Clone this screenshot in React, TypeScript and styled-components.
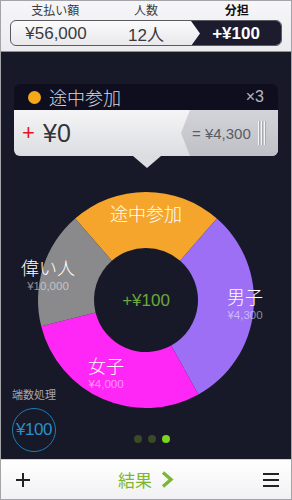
import React from "react";
import styled, { createGlobalStyle } from "styled-components";

const Global = createGlobalStyle`
  html, body { margin: 0; padding: 0; background: #ffffff; }
  * { box-sizing: border-box; }
`;

const FONT = `"Liberation Sans", "Noto Sans CJK JP", sans-serif`;

const Screen = styled.div`
  width: 292px;
  height: 500px;
  border: 1px solid #a4a4a8;
  display: flex;
  flex-direction: column;
  font-family: ${FONT};
  overflow: hidden;
`;

const Header = styled.div`
  height: 51px;
  flex: none;
  background: linear-gradient(#f6f6f8, #ececef);
  border-bottom: 1px solid #8e8e94;
  padding: 2px 9px 0 9px;
  display: flex;
  flex-direction: column;
`;

const LabelRow = styled.div`
  display: grid;
  grid-template-columns: 1fr 1fr 1fr;
  height: 16px;
  align-items: center;
`;

const Label = styled.div<{ $active?: boolean }>`
  text-align: center;
  font-size: 12px;
  line-height: 16px;
  color: ${(p) => (p.$active ? "#111" : "#3c3c40")};
  font-weight: ${(p) => (p.$active ? 700 : 400)};
`;

const Segments = styled.div`
  margin-top: 1px;
  height: 26px;
  border: 1px solid #5a5a60;
  border-radius: 6px;
  background: linear-gradient(#fbfbfc, #e9e9ec);
  display: grid;
  grid-template-columns: 1fr 1fr 1fr;
  overflow: hidden;
`;

const Segment = styled.div<{ $active?: boolean }>`
  display: flex;
  align-items: center;
  justify-content: center;
  font-size: 17px;
  color: ${(p) => (p.$active ? "#ffffff" : "#3a3a3e")};
  font-weight: ${(p) => (p.$active ? 700 : 400)};
  background: ${(p) => (p.$active ? "#1c1c2e" : "transparent")};
  clip-path: ${(p) =>
    p.$active ? "polygon(0 0, 100% 0, 100% 100%, 0 100%, 9px 50%)" : "none"};
`;

const Main = styled.div`
  flex: 1;
  background: #181928;
  display: flex;
  flex-direction: column;
  position: relative;
`;

const Popover = styled.div`
  margin: 32px 13px 0 13px;
  height: 72px;
  border-radius: 6px;
  position: relative;
  display: flex;
  flex-direction: column;
  &::after {
    content: "";
    position: absolute;
    left: 119px;
    bottom: -12px;
    width: 0;
    height: 0;
    border-left: 14px solid transparent;
    border-right: 14px solid transparent;
    border-top: 12px solid #dcdde1;
  }
`;

const PopHead = styled.div`
  height: 26px;
  background: #0e0e1f;
  border-radius: 6px 6px 0 0;
  display: flex;
  align-items: center;
  padding: 0 14px 0 14px;
  gap: 8px;
`;

const Dot = styled.span<{ $color: string }>`
  width: 13px;
  height: 13px;
  border-radius: 50%;
  background: ${(p) => p.$color};
  flex: none;
`;

const PopTitle = styled.span`
  font-size: 18px;
  color: #d8d8de;
  flex: 1;
  font-weight: 300;
`;

const PopCount = styled.span`
  font-size: 16px;
  color: #b8b8c0;
`;

const PopBody = styled.div`
  flex: 1;
  background: linear-gradient(#f5f5f7, #dcdde1);
  border-radius: 0 0 6px 6px;
  display: flex;
  align-items: center;
  overflow: hidden;
`;

const Plus = styled.span`
  color: #e8141c;
  font-size: 22px;
  margin-left: 8px;
  width: 20px;
  line-height: 1;
`;

const Amount = styled.span`
  font-size: 25px;
  color: #333338;
  flex: 1;
  margin-left: 1px;
`;

const Tag = styled.div`
  align-self: stretch;
  width: 97px;
  background: linear-gradient(#d3d4d9, #bfc0c6);
  clip-path: polygon(9px 0, 100% 0, 100% 100%, 9px 100%, 0 50%);
  display: flex;
  align-items: center;
  padding-left: 11px;
  gap: 7px;
`;

const TagText = styled.span`
  font-size: 15px;
  color: #5c5c62;
  white-space: nowrap;
`;

const Grip = styled.div`
  display: flex;
  gap: 2px;
  height: 24px;
  & > i {
    width: 1px;
    background: #f4f4f6;
    box-shadow: 1px 0 0 #a8a9ae;
  }
`;

const Chart = styled.svg`
  display: block;
  margin-top: 34px;
  flex: none;
`;

const BottomRow = styled.div`
  margin-top: -32px;
  flex: 1;
  display: grid;
  grid-template-columns: 1fr auto 1fr;
  padding: 0 0 0 11px;
  position: relative;
`;

const Rounding = styled.div`
  width: 44px;
  display: flex;
  flex-direction: column;
  align-items: center;
  gap: 6px;
`;

const RoundLabel = styled.div`
  font-size: 11px;
  line-height: 14px;
  color: #a6a6ae;
  white-space: nowrap;
`;

const RoundButton = styled.div`
  width: 44px;
  height: 44px;
  border-radius: 50%;
  border: 1px solid #1e7bb0;
  color: #2a8fca;
  font-size: 17px;
  display: flex;
  align-items: center;
  justify-content: center;
  letter-spacing: -0.5px;
`;

const Dots = styled.div`
  align-self: end;
  display: flex;
  gap: 6px;
  margin-bottom: 16px;
`;

const PageDot = styled.span<{ $active?: boolean }>`
  width: 8px;
  height: 8px;
  border-radius: 50%;
  background: ${(p) => (p.$active ? "#7ed321" : "#3b4a26")};
`;

const Footer = styled.div`
  height: 40px;
  flex: none;
  background: linear-gradient(#ffffff, #f1f1f3);
  border-top: 1px solid #d4d4d8;
  display: grid;
  grid-template-columns: 1fr auto 1fr;
  align-items: center;
  padding: 0 12px 0 14px;
`;

const IconBtn = styled.div<{ $right?: boolean }>`
  display: flex;
  justify-content: ${(p) => (p.$right ? "flex-end" : "flex-start")};
  align-items: center;
`;

const ResultBtn = styled.div`
  display: flex;
  align-items: center;
  gap: 9px;
  color: #7cb82f;
  font-size: 17px;
  margin-left: -2px;
`;

function arc(cx: number, cy: number, r0: number, r1: number, a0: number, a1: number) {
  const p = (r: number, a: number) => {
    const t = (a * Math.PI) / 180;
    return [cx + r * Math.sin(t), cy - r * Math.cos(t)].map((v) => v.toFixed(2)).join(" ");
  };
  const large = a1 - a0 > 180 ? 1 : 0;
  return `M ${p(r1, a0)} A ${r1} ${r1} 0 ${large} 1 ${p(r1, a1)} L ${p(r0, a1)} A ${r0} ${r0} 0 ${large} 0 ${p(r0, a0)} Z`;
}

const slices = [
  { from: -41, to: 41, color: "#f5a52b" },
  { from: 41, to: 151, color: "#9c6ff5" },
  { from: 151, to: 256, color: "#fe27f6" },
  { from: 256, to: 319, color: "#8a8a8c" },
];

const labels = [
  { x: 146, y: 215, name: "途中参加" },
  { x: 48, y: 269, name: "偉い人", amount: "¥10,000" },
  { x: 245, y: 298, name: "男子", amount: "¥4,300" },
  { x: 106, y: 367, name: "女子", amount: "¥4,000" },
];

const TOP = 190;

export default function App() {
  return (
    <Screen>
      <Global />
      <Header>
        <LabelRow>
          <Label>支払い額</Label>
          <Label>人数</Label>
          <Label $active>分担</Label>
        </LabelRow>
        <Segments>
          <Segment>¥56,000</Segment>
          <Segment>12人</Segment>
          <Segment $active>+¥100</Segment>
        </Segments>
      </Header>
      <Main>
        <Popover>
          <PopHead>
            <Dot $color="#f7a819" />
            <PopTitle>途中参加</PopTitle>
            <PopCount>×3</PopCount>
          </PopHead>
          <PopBody>
            <Plus>+</Plus>
            <Amount>¥0</Amount>
            <Tag>
              <TagText>= ¥4,300</TagText>
              <Grip>
                <i />
                <i />
                <i />
              </Grip>
            </Tag>
          </PopBody>
        </Popover>
        <Chart width={290} height={230} viewBox={`1 ${TOP} 290 230`}>
          {slices.map((s, i) => (
            <path key={i} d={arc(146, 300, 52, 108, s.from, s.to)} fill={s.color} />
          ))}
          {labels.map((l, i) => (
            <g key={i} fontFamily={FONT} textAnchor="middle">
              <text x={l.x} y={l.y + 6} fontSize={18} fill="#ffffff" fontWeight={300}>
                {l.name}
              </text>
              {l.amount && (
                <text x={l.x} y={l.y + 21} fontSize={11.5} fill="rgba(255,255,255,0.5)">
                  {l.amount}
                </text>
              )}
            </g>
          ))}
          <text x={146} y={306} fontFamily={FONT} fontSize={17} fill="#6aa93a" textAnchor="middle">
            +¥100
          </text>
        </Chart>
        <BottomRow>
          <Rounding>
            <RoundLabel>端数処理</RoundLabel>
            <RoundButton>¥100</RoundButton>
          </Rounding>
          <Dots>
            <PageDot />
            <PageDot />
            <PageDot $active />
          </Dots>
          <div />
        </BottomRow>
      </Main>
      <Footer>
        <IconBtn>
          <svg width="16" height="16" viewBox="0 0 16 16">
            <path d="M8 1v14M1 8h14" stroke="#222" strokeWidth="2" fill="none" />
          </svg>
        </IconBtn>
        <ResultBtn>
          <span>結果</span>
          <svg width="13" height="17" viewBox="0 0 13 17">
            <path d="M2 1.5 L10 8.5 L2 15.5" stroke="#7cb82f" strokeWidth="3.4" fill="none" />
          </svg>
        </ResultBtn>
        <IconBtn $right>
          <svg width="16" height="14" viewBox="0 0 16 14">
            <path d="M0 1h16M0 7h16M0 13h16" stroke="#222" strokeWidth="2" fill="none" />
          </svg>
        </IconBtn>
      </Footer>
    </Screen>
  );
}
